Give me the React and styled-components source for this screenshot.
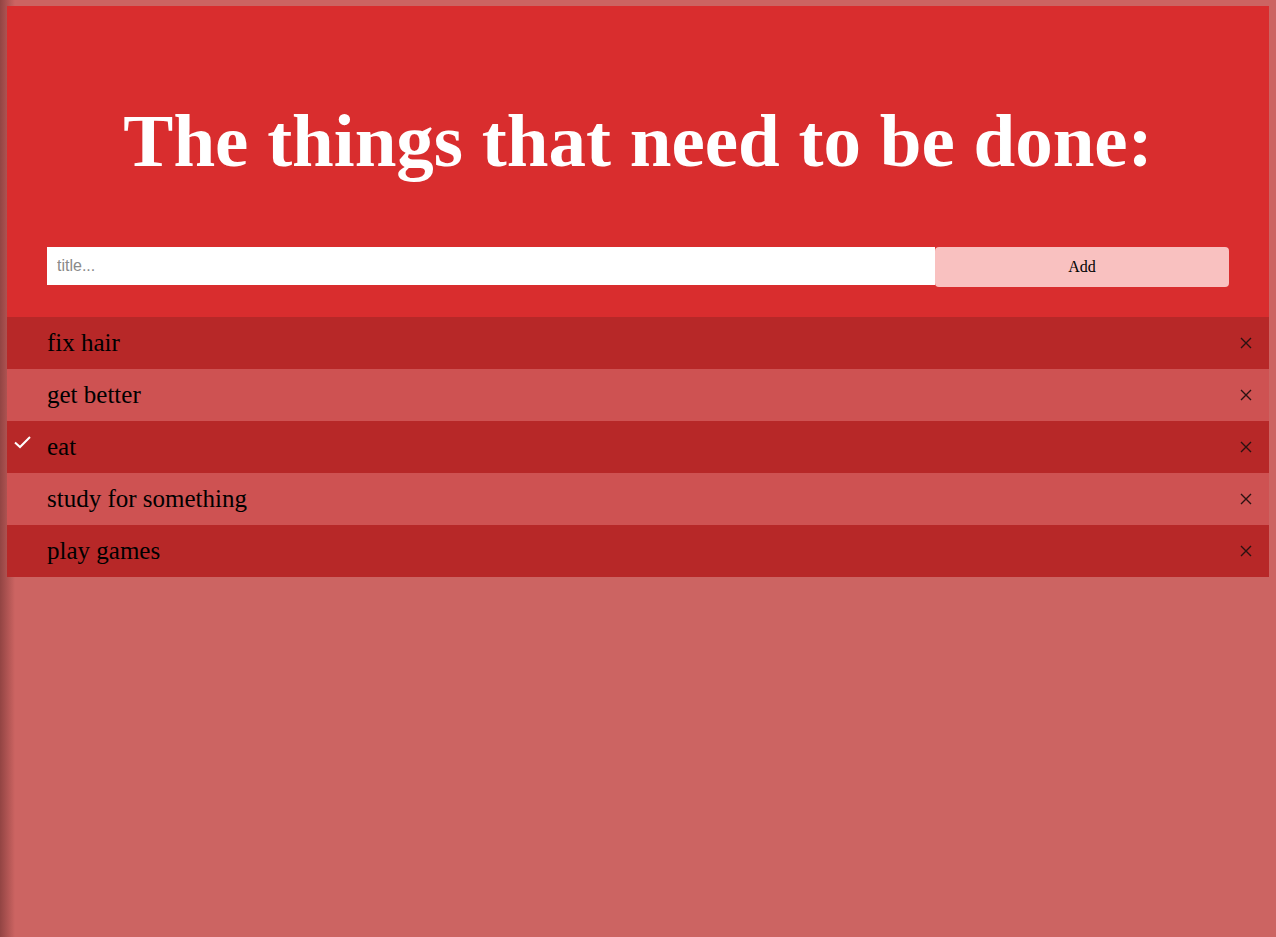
import React, { useState } from 'react';
import styled, { createGlobalStyle } from 'styled-components';

const GlobalStyle = createGlobalStyle`
  html, body {
    margin: 0;
    min-height: 100%;
  }
  body {
    background: linear-gradient(to right, rgba(60, 20, 20, 0.4), rgba(60, 20, 20, 0) 15px), #cc6462;
    min-height: 937px;
    font-family: "Liberation Serif", "Times New Roman", serif;
  }
`;

function App() {
  const [todos, setTodos] = useState([
    { id: 1, title: 'fix hair', done: false },
    { id: 2, title: 'get better', done: false },
    { id: 3, title: 'eat', done: true },
    { id: 4, title: 'study for something', done: false },
    { id: 5, title: 'play games', done: false },
  ]);
  const [text, setText] = useState('');

  const addTodo = () => {
    if (!text.trim()) return;
    setTodos([...todos, { id: Date.now(), title: text, done: false }]);
    setText('');
  };

  return (
    <Page>
      <GlobalStyle />
      <Header>
        <Title>The things that need to be done:</Title>
        <Form onSubmit={(e) => { e.preventDefault(); addTodo(); }}>
          <Input placeholder="title..." value={text} onChange={(e) => setText(e.target.value)} />
          <AddButton type="submit">Add</AddButton>
        </Form>
      </Header>
      <List>
        {todos.map((todo, i) => (
          <Item key={todo.id} dark={i % 2 === 0} onClick={() => setTodos(todos.map((t) => t.id === todo.id ? { ...t, done: !t.done } : t))}>
            {todo.done && (
              <Check width="20" height="16" viewBox="0 0 20 16">
                <path d="M2 8.5 L7 13 L17 3" fill="none" stroke="#fff" strokeWidth="2" />
              </Check>
            )}
            {todo.title}
            <Close onClick={(e) => { e.stopPropagation(); setTodos(todos.filter((t) => t.id !== todo.id)); }}>
              <svg width="12" height="12" viewBox="0 0 12 12">
                <path d="M1 1 L11 11 M11 1 L1 11" stroke="#2a1212" strokeWidth="1.4" />
              </svg>
            </Close>
          </Item>
        ))}
      </List>
    </Page>
  );
}

const Page = styled.div`
  padding: 6px 7px;
`;

const Header = styled.div`
  background: #d92d2e;
  padding: 92px 40px 30px;
`;

const Title = styled.h1`
  margin: 0 0 63px;
  color: #fff;
  font-family: "Liberation Serif", "Times New Roman", serif;
  font-weight: bold;
  font-size: 75px;
  line-height: 86px;
  text-align: center;
`;

const Form = styled.form`
  display: grid;
  grid-template-columns: 888px 1fr;
  align-items: start;
`;

const Input = styled.input`
  height: 38px;
  box-sizing: border-box;
  border: none;
  outline: none;
  padding: 0 10px;
  font-family: "Liberation Sans", Arial, sans-serif;
  font-size: 16px;
  background: #fff;
  &::placeholder {
    color: #8a8a8a;
  }
`;

const AddButton = styled.button`
  height: 40px;
  border: none;
  border-radius: 4px;
  background: #f9c1c0;
  color: #000;
  font-family: "Liberation Serif", "Times New Roman", serif;
  font-size: 16px;
  cursor: pointer;
`;

const List = styled.ul`
  margin: 0;
  padding: 0;
  list-style: none;
`;

const Item = styled.li`
  position: relative;
  display: flex;
  align-items: center;
  height: 52px;
  padding-left: 40px;
  background: ${(p) => (p.dark ? '#b72828' : '#ce5252')};
  color: #000;
  font-size: 25px;
  cursor: pointer;
`;

const Check = styled.svg`
  position: absolute;
  left: 6px;
  top: 13px;
`;

const Close = styled.span`
  position: absolute;
  right: 17px;
  top: 20px;
  display: flex;
  cursor: pointer;
`;

export default App;
